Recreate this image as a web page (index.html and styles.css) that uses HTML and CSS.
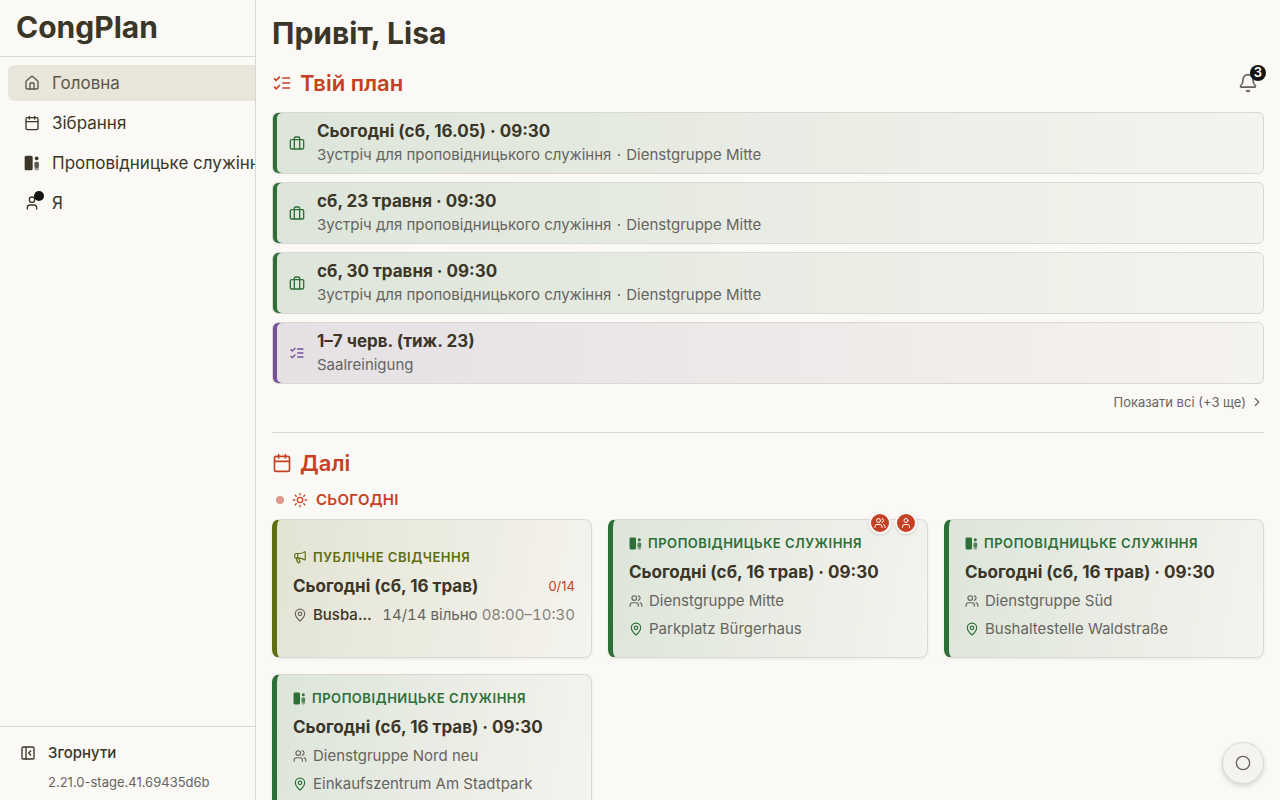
FILE: index.html
```html
<!DOCTYPE html>
<html lang="uk">
<head>
    <meta charset="UTF-8">
    <meta name="viewport" content="width=device-width, initial-scale=1.0">
    <title>CongPlan</title>
    <link rel="stylesheet" href="styles.css">
</head>
<body>
    <!-- Icons -->
    <svg class="sprite" aria-hidden="true">
        <symbol id="home" viewBox="0 0 24 24"><path d="M15 21v-8a1 1 0 0 0-1-1h-4a1 1 0 0 0-1 1v8"/><path d="M3 10a2 2 0 0 1 .709-1.528l7-5.999a2 2 0 0 1 2.582 0l7 5.999A2 2 0 0 1 21 10v9a2 2 0 0 1-2 2H5a2 2 0 0 1-2-2z"/></symbol>
        <symbol id="calendar" viewBox="0 0 24 24"><path d="M8 2v4M16 2v4M3 10h18"/><rect x="3" y="4" width="18" height="18" rx="2"/></symbol>
        <symbol id="ministry" viewBox="0 0 24 24"><g fill="currentColor" stroke="none"><rect x="1" y="1" width="12" height="22" rx="2.5"/><circle cx="19" cy="5" r="2.8"/><rect x="15.5" y="10" width="7" height="9" rx="2.5" opacity=".8"/><rect x="16" y="17" width="6" height="6" rx="1.5" opacity=".5"/></g></symbol>
        <symbol id="user" viewBox="0 0 24 24"><circle cx="12" cy="7" r="4"/><path d="M19 21v-2a4 4 0 0 0-4-4H9a4 4 0 0 0-4 4v2"/></symbol>
        <symbol id="users" viewBox="0 0 24 24"><circle cx="9" cy="7" r="4"/><path d="M16 21v-2a4 4 0 0 0-4-4H6a4 4 0 0 0-4 4v2M16 3.128a4 4 0 0 1 0 7.744M22 21v-2a4 4 0 0 0-3-3.87"/></symbol>
        <symbol id="panel" viewBox="0 0 24 24"><rect x="3" y="3" width="18" height="18" rx="2"/><path d="M9 3v18M16 15l-3-3 3-3"/></symbol>
        <symbol id="list" viewBox="0 0 24 24"><path d="m3 17 2 2 4-4M3 7l2 2 4-4M13 6h8M13 12h8M13 18h8"/></symbol>
        <symbol id="bell" viewBox="0 0 24 24"><path d="M10.268 21a2 2 0 0 0 3.464 0"/><path d="M3.262 15.326A1 1 0 0 0 4 17h16a1 1 0 0 0 .74-1.673C19.41 13.956 18 12.499 18 8A6 6 0 0 0 6 8c0 4.499-1.411 5.956-2.738 7.326"/></symbol>
        <symbol id="case" viewBox="0 0 24 24"><rect x="2" y="7" width="20" height="14" rx="2"/><path d="M16 21V5a2 2 0 0 0-2-2h-4a2 2 0 0 0-2 2v16"/></symbol>
        <symbol id="chevron" viewBox="0 0 24 24"><path d="m9 18 6-6-6-6"/></symbol>
        <symbol id="sun" viewBox="0 0 24 24"><circle cx="12" cy="12" r="4"/><path d="M12 2v2M12 20v2M4.93 4.93l1.41 1.41M17.66 17.66l1.41 1.41M2 12h2M20 12h2M6.34 17.66l-1.41 1.41M19.07 4.93l-1.41 1.41"/></symbol>
        <symbol id="megaphone" viewBox="0 0 24 24"><path d="M11 6a13 13 0 0 0 8.4-2.8A1 1 0 0 1 21 4v12a1 1 0 0 1-1.6.8A13 13 0 0 0 11 14H5a2 2 0 0 1-2-2V8a2 2 0 0 1 2-2z"/><path d="M6 14a12 12 0 0 0 2.4 7.2 2 2 0 0 0 3.2-2.4A8 8 0 0 1 10 14M8 6v8"/></symbol>
        <symbol id="pin" viewBox="0 0 24 24"><path d="M20 10c0 4.993-5.539 10.193-7.399 11.799a1 1 0 0 1-1.202 0C9.539 20.193 4 14.993 4 10a8 8 0 0 1 16 0"/><circle cx="12" cy="10" r="3"/></symbol>
        <symbol id="circle" viewBox="0 0 24 24"><circle cx="12" cy="12" r="10"/></symbol>
    </svg>

    <div class="app">
        <aside class="sidebar">
            <div class="brand">CongPlan</div>
            <nav class="nav">
                <a href="#" class="nav-link active"><svg class="icon"><use href="#home"/></svg>Головна</a>
                <a href="#" class="nav-link"><svg class="icon"><use href="#calendar"/></svg>Зібрання</a>
                <a href="#" class="nav-link"><svg class="icon"><use href="#ministry"/></svg>Проповідницьке служіння</a>
                <a href="#" class="nav-link"><span class="icon-wrap"><svg class="icon"><use href="#user"/></svg><span class="nav-dot"></span></span>Я</a>
            </nav>
            <div class="sidebar-footer">
                <button type="button" class="collapse"><svg class="icon"><use href="#panel"/></svg>Згорнути</button>
                <div class="version">2.21.0-stage.41.69435d6b</div>
            </div>
        </aside>

        <main class="main">
            <h1>Привіт, Lisa</h1>

            <section class="plan">
                <div class="section-head">
                    <h2><svg class="icon icon-lg"><use href="#list"/></svg>Твій план</h2>
                    <button type="button" class="bell" aria-label="Сповіщення"><svg class="icon icon-lg"><use href="#bell"/></svg><span class="badge">3</span></button>
                </div>
                <div class="plan-list">
                    <a href="#" class="plan-item green">
                        <svg class="icon"><use href="#case"/></svg>
                        <div><h3>Сьогодні (сб, 16.05) · 09:30</h3><p>Зустріч для проповідницького служіння <span class="sep">·</span> Dienstgruppe Mitte</p></div>
                    </a>
                    <a href="#" class="plan-item green">
                        <svg class="icon"><use href="#case"/></svg>
                        <div><h3>сб, 23 травня · 09:30</h3><p>Зустріч для проповідницького служіння <span class="sep">·</span> Dienstgruppe Mitte</p></div>
                    </a>
                    <a href="#" class="plan-item green">
                        <svg class="icon"><use href="#case"/></svg>
                        <div><h3>сб, 30 травня · 09:30</h3><p>Зустріч для проповідницького служіння <span class="sep">·</span> Dienstgruppe Mitte</p></div>
                    </a>
                    <a href="#" class="plan-item purple">
                        <svg class="icon"><use href="#list"/></svg>
                        <div><h3>1–7 черв. (тиж. 23)</h3><p>Saalreinigung</p></div>
                    </a>
                </div>
                <button type="button" class="show-all">Показати всі (+3 ще)<svg class="icon icon-sm"><use href="#chevron"/></svg></button>
            </section>

            <section class="next">
                <h2><svg class="icon icon-lg"><use href="#calendar"/></svg>Далі</h2>
                <div class="day"><span class="day-dot"></span><svg class="icon"><use href="#sun"/></svg>СЬОГОДНІ</div>
                <div class="cards">
                    <article class="card olive">
                        <div class="card-type"><svg class="icon icon-sm"><use href="#megaphone"/></svg>ПУБЛІЧНЕ СВІДЧЕННЯ</div>
                        <div class="card-title"><h3>Сьогодні (сб, 16 трав)</h3><span class="count">0/14</span></div>
                        <div class="slot">
                            <svg class="icon icon-sm"><use href="#pin"/></svg>
                            <span class="place">Busbahnhof</span>
                            <span class="free">14/14 вільно <span class="time">08:00–10:30</span></span>
                        </div>
                    </article>
                    <article class="card green">
                        <div class="marks"><span class="mark"><svg class="icon"><use href="#users"/></svg></span><span class="mark"><svg class="icon"><use href="#user"/></svg></span></div>
                        <div class="card-type"><svg class="icon icon-xs"><use href="#ministry"/></svg>ПРОПОВІДНИЦЬКЕ СЛУЖІННЯ</div>
                        <div class="card-title"><h3>Сьогодні (сб, 16 трав) · 09:30</h3></div>
                        <div class="row"><svg class="icon icon-sm"><use href="#users"/></svg>Dienstgruppe Mitte</div>
                        <div class="row"><svg class="icon icon-sm tinted"><use href="#pin"/></svg>Parkplatz Bürgerhaus</div>
                    </article>
                    <article class="card green">
                        <div class="card-type"><svg class="icon icon-xs"><use href="#ministry"/></svg>ПРОПОВІДНИЦЬКЕ СЛУЖІННЯ</div>
                        <div class="card-title"><h3>Сьогодні (сб, 16 трав) · 09:30</h3></div>
                        <div class="row"><svg class="icon icon-sm"><use href="#users"/></svg>Dienstgruppe Süd</div>
                        <div class="row"><svg class="icon icon-sm tinted"><use href="#pin"/></svg>Bushaltestelle Waldstraße</div>
                    </article>
                    <article class="card green">
                        <div class="card-type"><svg class="icon icon-xs"><use href="#ministry"/></svg>ПРОПОВІДНИЦЬКЕ СЛУЖІННЯ</div>
                        <div class="card-title"><h3>Сьогодні (сб, 16 трав) · 09:30</h3></div>
                        <div class="row"><svg class="icon icon-sm"><use href="#users"/></svg>Dienstgruppe Nord neu</div>
                        <div class="row"><svg class="icon icon-sm tinted"><use href="#pin"/></svg>Einkaufszentrum Am Stadtpark</div>
                    </article>
                </div>
            </section>
        </main>
    </div>

    <button type="button" class="fab" aria-label="Меню"><svg class="icon"><use href="#circle"/></svg></button>
</body>
</html>
```
FILE: styles.css
```css
* {
    box-sizing: border-box;
}
body {
    margin: 0;
    background: #fbf9f5;
    color: #3b3627;
    font-family: Inter, "Liberation Sans", sans-serif;
    font-size: 17px;
    line-height: 24px;
}
h1, h2, h3, p {
    margin: 0;
}
a {
    color: inherit;
    text-decoration: none;
}
button {
    padding: 0;
    border: none;
    background: none;
    color: inherit;
    font: inherit;
    cursor: pointer;
}
.sprite {
    position: absolute;
    width: 0;
    height: 0;
}
.icon {
    display: block;
    flex: none;
    width: 16px;
    height: 16px;
    fill: none;
    stroke: currentColor;
    stroke-width: 2;
    stroke-linecap: round;
    stroke-linejoin: round;
}
.icon-lg {
    width: 20px;
    height: 20px;
}
.icon-sm {
    width: 14px;
    height: 14px;
}
.icon-xs {
    width: 13px;
    height: 13px;
}

.app {
    display: flex;
    height: 100vh;
    overflow: hidden;
}

/* Sidebar */
.sidebar {
    display: flex;
    flex-direction: column;
    flex: none;
    width: 256px;
    border-right: 1px solid #dad8d2;
    overflow: hidden;
}
.brand {
    padding: 7px 16px 9px;
    border-bottom: 1px solid #dad8d2;
    font-size: 30px;
    font-weight: 700;
    line-height: 40px;
}
.nav {
    display: flex;
    flex-direction: column;
    flex: 1;
    gap: 4px;
    width: 300px;
    padding: 8px;
}
.nav-link {
    display: flex;
    align-items: center;
    gap: 12px;
    padding: 6px 16px;
    border-radius: 6px;
    white-space: nowrap;
}
.nav-link.active {
    background: #e8e6da;
    color: #5b564a;
}
.icon-wrap {
    position: relative;
}
.nav-dot {
    position: absolute;
    top: -4px;
    right: -4px;
    width: 10px;
    height: 10px;
    border-radius: 50%;
    background: #141414;
}
.sidebar-footer {
    padding: 12px 20px 6px;
    border-top: 1px solid #dad8d2;
}
.collapse {
    display: flex;
    align-items: center;
    gap: 12px;
    padding: 2px 0;
    font-size: 15px;
    font-weight: 500;
}
.version {
    padding: 3px 0 0 28px;
    color: #67645e;
    font-size: 13px;
}

/* Main */
.main {
    flex: 1;
    min-width: 0;
    padding: 11px 16px;
    overflow: hidden;
}
h1 {
    font-size: 30px;
    font-weight: 700;
    line-height: 44px;
}
h2 {
    display: flex;
    align-items: center;
    gap: 8px;
    color: #c64023;
    font-size: 22px;
    font-weight: 600;
    line-height: 32px;
}
h3 {
    font-size: 17px;
    font-weight: 700;
    line-height: 24px;
}
.section-head {
    display: flex;
    justify-content: space-between;
    align-items: center;
    padding: 12px 0 13px;
}
.bell {
    position: relative;
    padding: 6px;
    color: #67645e;
}
.badge {
    position: absolute;
    top: -2px;
    right: -2px;
    width: 16px;
    height: 16px;
    border-radius: 50%;
    background: #141414;
    color: #ffffff;
    font-size: 13px;
    font-weight: 600;
    line-height: 14px;
    text-align: center;
}
.plan {
    display: flex;
    flex-direction: column;
    border-bottom: 1px solid #dad8d2;
    padding-bottom: 18px;
}
.plan-list {
    display: flex;
    flex-direction: column;
    gap: 8px;
}
.green {
    --accent: #2d6f37;
    --tint: #dde5da;
}
.purple {
    --accent: #75509b;
    --tint: #e4e0e4;
}
.olive {
    --accent: #5f6e11;
    --tint: #e3e4d4;
}
.plan-item {
    display: flex;
    align-items: center;
    gap: 12px;
    padding: 6px 16px;
    border: 1px solid #dad8d2;
    border-radius: 6px;
    background: linear-gradient(90deg, var(--tint), #f5f3ee);
    box-shadow: inset 4px 0 0 var(--accent);
}
.plan-item .icon {
    color: var(--accent);
}
.plan-item p {
    color: #67645e;
    font-size: 15px;
    line-height: 24px;
}
.sep {
    padding: 0 1px;
}
.show-all {
    display: flex;
    align-items: center;
    align-self: flex-end;
    gap: 4px;
    margin-top: 6px;
    color: #67645e;
    font-size: 13px;
}

/* Upcoming */
.next {
    padding-top: 14px;
}
.day {
    display: flex;
    align-items: center;
    gap: 8px;
    padding: 9px 4px 7px;
    color: #c64023;
    font-size: 15px;
    font-weight: 600;
    letter-spacing: 0.02em;
}
.day-dot {
    width: 8px;
    height: 8px;
    border-radius: 50%;
    background: #e0998a;
}
.cards {
    display: grid;
    grid-template-columns: repeat(3, 1fr);
    gap: 16px;
}
.card {
    position: relative;
    display: flex;
    flex-direction: column;
    justify-content: center;
    gap: 4px;
    min-width: 0;
    padding: 11px 16px 16px;
    border: 1px solid #dad8d2;
    border-left: 5px solid var(--accent);
    border-radius: 8px;
    background: linear-gradient(100deg, var(--tint), #f5f3ee);
    box-shadow: 0 1px 3px rgba(0, 0, 0, 0.08);
}
.card h3 {
    line-height: 26px;
}
.card-type {
    display: flex;
    align-items: center;
    gap: 6px;
    color: var(--accent);
    font-size: 13px;
    font-weight: 600;
    letter-spacing: 0.04em;
}
.card-title {
    display: flex;
    justify-content: space-between;
    align-items: center;
}
.count {
    color: #c64023;
    font-size: 13px;
}
.row, .slot {
    display: flex;
    align-items: center;
    gap: 6px;
    color: #67645e;
    font-size: 15px;
}
.tinted {
    color: var(--accent);
}
.place {
    flex: 1;
    min-width: 0;
    overflow: hidden;
    color: #3b3627;
    font-weight: 500;
    text-overflow: ellipsis;
    white-space: nowrap;
}
.free {
    font-variant-numeric: tabular-nums;
    white-space: nowrap;
}
.time {
    color: #85827b;
}
.marks {
    position: absolute;
    top: -8px;
    right: 10px;
    display: flex;
    gap: 4px;
}
.mark {
    display: flex;
    align-items: center;
    justify-content: center;
    width: 22px;
    height: 22px;
    border: 2px solid #fbf9f5;
    border-radius: 50%;
    background: #c64023;
    color: #ffffff;
    box-shadow: 0 1px 3px rgba(0, 0, 0, 0.15);
}
.mark .icon {
    width: 12px;
    height: 12px;
}

.fab {
    position: fixed;
    right: 16px;
    bottom: 16px;
    display: flex;
    align-items: center;
    justify-content: center;
    width: 42px;
    height: 42px;
    border: 1px solid #dad8d2;
    border-radius: 50%;
    background: #f5f3ee;
    color: #67645e;
    box-shadow: 0 2px 5px rgba(0, 0, 0, 0.15);
}
```
